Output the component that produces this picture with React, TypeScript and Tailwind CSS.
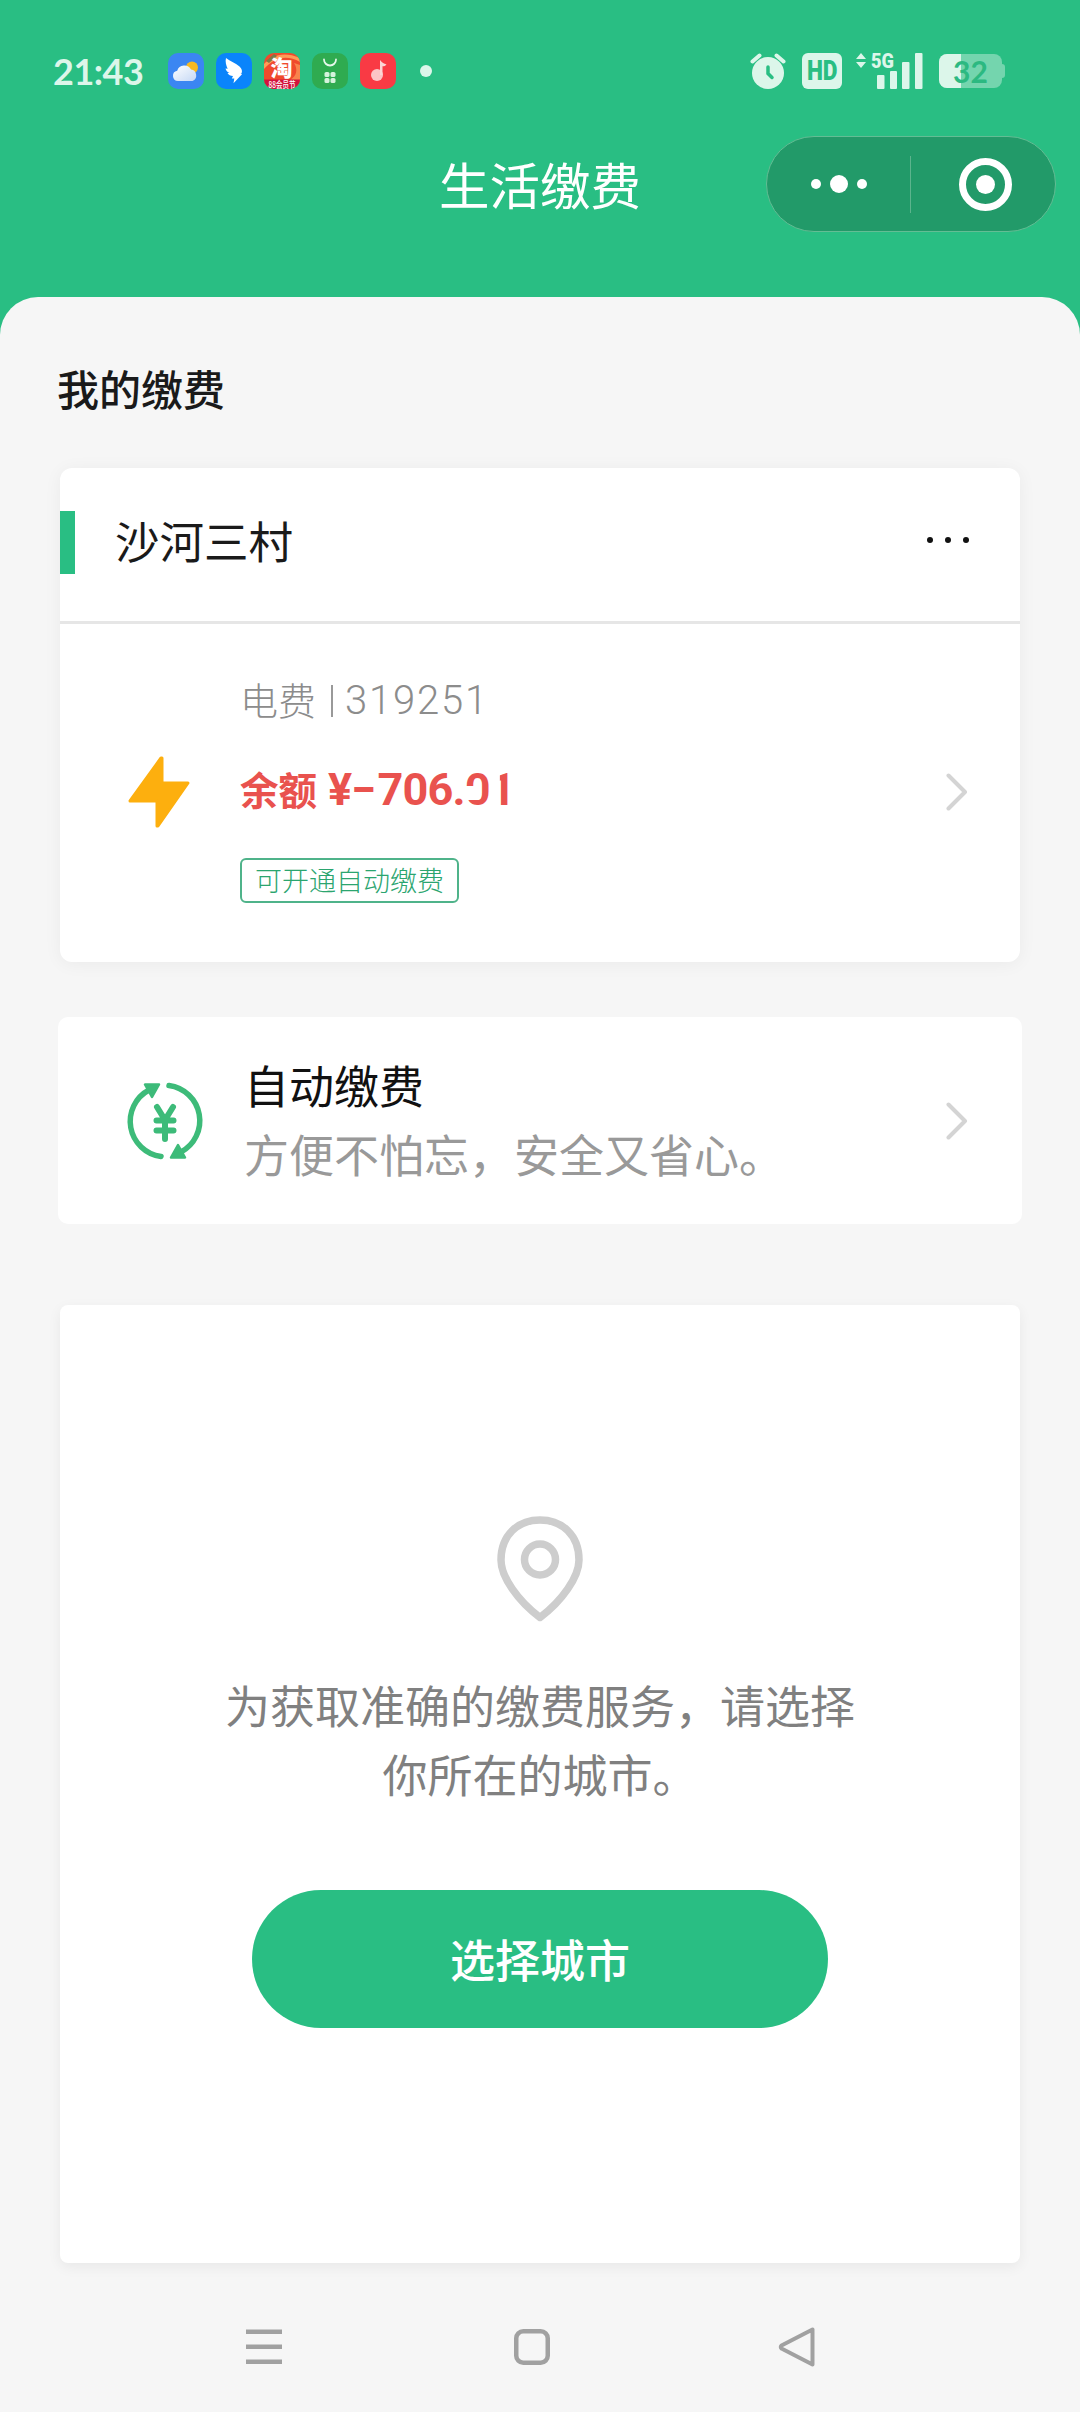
import type { ReactNode } from "react";

const SANS = "font-['Noto_Sans_CJK_SC','Roboto',sans-serif]";

export default function App() {
  return (
    <div className={`flex h-[2412px] w-[1080px] flex-col overflow-hidden bg-[#29be83] ${SANS}`}>
      <StatusBar />
      <TitleBar />
      <main className="flex flex-1 flex-col rounded-t-[38px] bg-[#f6f6f6] px-[60px]">
        <h2 className="mt-[61px] h-[60px] -translate-x-[3px] text-[42px] leading-[60px] font-medium text-[#1a1a1a]">
          我的缴费
        </h2>
        <BillCard />
        <AutoPayCard />
        <CityCard />
        <NavBar />
      </main>
    </div>
  );
}

// ── System status bar ────────────────────────────────────────────
function StatusBar() {
  return (
    <div className="mt-[47px] flex h-12 items-center pl-[53px] text-[#dcf6ea]">
      <span className="w-[115px] font-['Lato',sans-serif] text-[36px] leading-[48px] font-bold tracking-[-0.5px]">
        21:43
      </span>
      <div className="flex items-center gap-3">
        <WeatherIcon />
        <WingIcon />
        <TaobaoIcon />
        <MarketIcon />
        <MusicIcon />
      </div>
      <span className="ml-6 size-3 rounded-full bg-[#dcf6ea]" />

      <div className="ml-[318px] flex items-center">
        <AlarmIcon />
        <span className="ml-4 flex h-9 w-10 items-center justify-center rounded-[6px] bg-[#dcf6ea] font-['Roboto',sans-serif] text-[27px] leading-none font-black text-[#29be83]">
          <span className="scale-x-[0.84]">HD</span>
        </span>
        <SignalIcon />
        <Battery />
      </div>
    </div>
  );
}

function AppTile({ color, children }: { color: string; children: ReactNode }) {
  return (
    <svg width="36" height="36" viewBox="0 0 36 36" className="overflow-visible">
      <rect width="36" height="36" rx="10" fill={color} />
      {children}
    </svg>
  );
}

function WeatherIcon() {
  return (
    <AppTile color="#3b86f2">
      <defs>
        <linearGradient id="cloud" x1="0" y1="0" x2="1" y2="1">
          <stop offset="0" stopColor="#fff" />
          <stop offset="1" stopColor="#c5d8f5" />
        </linearGradient>
      </defs>
      <circle cx="24" cy="14.500" r="6" fill="#f8b922" />
      <path d="M10 28a5.200 5.200 0 0 1-.8-10.300A7.500 7.500 0 0 1 23 16.500a6 6 0 0 1 1.500 11.500z" fill="url(#cloud)" />
    </AppTile>
  );
}

function WingIcon() {
  return (
    <AppTile color="#0a84fb">
      <path
        d="M10 5c4 3.500 10 5 13.500 8.500 2.500 2.500 3 4.500 2 7h-1l1.500.8-8.500 9 .8-4.800h-2.500l1.200-2.500c-2.500 0-4.500-1-5.500-3h2c-2-1-3.500-2.500-4-4.500l2.200.3C10.200 12.500 9 8.500 10 5z"
        fill="#fff"
      />
    </AppTile>
  );
}

function TaobaoIcon() {
  return (
    <AppTile color="#f04a2c">
      <clipPath id="taobao-tile">
        <rect width="36" height="36" rx="10" />
      </clipPath>
      <g clipPath="url(#taobao-tile)">
        <path d="M0 11C8 2 20-2 36 5v4C22 1 10 5 0 16z" fill="#ff9b57" />
        <path d="M2 8l8-7 3 2-8 7z" fill="#7d7a45" />
        <path d="M30 10c4 6 3 13-4 17h10V12z" fill="#f9844c" />
        <rect y="26.500" width="36" height="9.500" fill="#d3123c" />
      </g>
      <text x="17.500" y="22.500" textAnchor="middle" fontSize="22" fontWeight="900" fill="#fff">
        淘
      </text>
      <text x="18" y="34.500" textAnchor="middle" fontSize="9" fontWeight="500" textLength="27" lengthAdjust="spacingAndGlyphs" fill="#fff">
        88会员节
      </text>
    </AppTile>
  );
}

function MarketIcon() {
  return (
    <AppTile color="#2fab50">
      <path d="M12 6.500a6 6 0 0 0 12 0" fill="none" stroke="#e6f8ea" strokeWidth="1.800" strokeLinecap="round" />
      <g fill="#d5f3dc">
        <rect x="12.500" y="19" width="5" height="5" rx="1.600" />
        <rect x="18.500" y="19" width="5" height="5" rx="1.600" />
        <rect x="12.500" y="25" width="5" height="5" rx="1.600" />
        <rect x="18.500" y="25" width="5" height="5" rx="1.600" />
      </g>
    </AppTile>
  );
}

function MusicIcon() {
  return (
    <AppTile color="#f93a44">
      <circle cx="17" cy="22" r="6" fill="#fcc4c6" />
      <path d="M20 22V7c2 3 4 3.500 6.500 4.500-1 1.500-3 2-4 1.800V22z" fill="#fcd5d6" />
    </AppTile>
  );
}

function AlarmIcon() {
  return (
    <svg width="36" height="36" viewBox="0 0 36 36" fill="none">
      <circle cx="18" cy="20" r="16" fill="#dcf6ea" />
      <path d="M2.500 8.500l7-6M33.500 8.500l-7-6" stroke="#dcf6ea" strokeWidth="4" strokeLinecap="round" />
      <path d="M18 14v6.500l4 4" stroke="#29be83" strokeWidth="3.500" strokeLinecap="round" />
    </svg>
  );
}

function SignalIcon() {
  return (
    <svg width="70" height="38" viewBox="0 0 70 38" className="-mt-0.5 ml-3.5 overflow-visible" fill="#dcf6ea">
      <path d="M0 8l5-6 5 6zM0 11l5 6 5-6z" />
      <text
        x="15"
        y="17"
        fontSize="21"
        fontWeight="900"
        textLength="23"
        lengthAdjust="spacingAndGlyphs"
        className="font-['Roboto',sans-serif]"
      >
        5G
      </text>
      <rect x="21" y="24" width="7.500" height="14" rx="1" />
      <rect x="34" y="20" width="7" height="18" rx="1" />
      <rect x="46" y="11" width="7.500" height="27" rx="1" />
      <rect x="59" y="2" width="7.500" height="36" rx="1" />
    </svg>
  );
}

function Battery() {
  return (
    <div className="ml-[13px] flex items-center">
      <div className="relative flex h-[34px] w-[63px] items-center justify-center overflow-hidden rounded-lg bg-[#74d5ae]">
        <span className="absolute inset-y-0 left-0 w-[22px] bg-[#dcf6ea]" />
        <span className="relative font-['Lato',sans-serif] text-[30px] leading-[34px] font-bold text-[#2cb981]">32</span>
      </div>
      <span className="h-3.5 w-[3px] rounded-r bg-[#74d5ae]" />
    </div>
  );
}

// ── Mini-program title and capsule ───────────────────────────────
function TitleBar() {
  return (
    <header className="mt-[41px] mb-[65px] grid h-24 grid-cols-[1fr_auto_1fr] items-center">
      <h1 className="col-start-2 -translate-y-px text-[50.500px] leading-[96px] text-white">生活缴费</h1>
      <div className="mr-6 flex h-24 w-[290px] items-center justify-self-end rounded-full border border-[#63bd94] bg-[#229a69]">
        <div className="flex w-[143px] items-center justify-center gap-[9px]">
          <span className="size-2.5 rounded-full bg-white" />
          <span className="size-[18px] rounded-full bg-white" />
          <span className="size-2.5 rounded-full bg-white" />
        </div>
        <span className="h-[57px] w-px bg-[#5cb48d]" />
        <div className="flex flex-1 items-center justify-center pl-1">
          <span className="flex size-[53px] items-center justify-center rounded-full border-[7px] border-white">
            <span className="size-[19px] rounded-full bg-white" />
          </span>
        </div>
      </div>
    </header>
  );
}

function Chevron() {
  return (
    <svg width="22" height="38" viewBox="0 0 22 38" fill="none" stroke="#d4d4d4" strokeWidth="4" strokeLinecap="round" strokeLinejoin="round">
      <path d="M2.500 2.500L19 19 2.500 35.500" />
    </svg>
  );
}

// ── Household bill ───────────────────────────────────────────────
function BillCard() {
  return (
    <section className="mt-[50px] flex h-[494px] shrink-0 flex-col overflow-hidden rounded-xl bg-white shadow-[0_2px_18px_rgba(0,0,0,0.05)]">
      <div className="flex h-[156px] shrink-0 items-center border-b-[3px] border-[#e6e6e6] pr-[51px] pb-[5px]">
        <span className="h-[63px] w-[15px] bg-[#29be83]" />
        <h3 className="ml-10 -translate-y-0.5 text-[44.500px] leading-[60px] text-[#1a1a1a]">沙河三村</h3>
        <div className="ml-auto flex -translate-y-0.5 gap-3">
          <span className="size-1.5 rounded-full bg-[#111]" />
          <span className="size-1.5 rounded-full bg-[#111]" />
          <span className="size-1.5 rounded-full bg-[#111]" />
        </div>
      </div>

      <div className="flex flex-1 items-center pr-[52px] pb-[3px]">
        <svg width="64" height="74" viewBox="0 0 64 74" className="ml-[67px]">
          <path d="M34 3h1v25h26L31 71h-1V46H3z" fill="#fdaf0e" stroke="#fdaf0e" strokeWidth="3" strokeLinejoin="round" />
        </svg>
        <div className="ml-[49px] flex h-[222px] flex-col">
          <div className="flex h-10 items-center whitespace-pre leading-10 text-[#8c8c8c]">
            <span className="-translate-y-0.5 text-[38px] font-light">电费</span>
            <span className="ml-[15px] h-8 w-0.5 bg-[#999]" />
            <span className="ml-3 font-['Roboto',sans-serif] text-[40px] font-light tracking-[1.800px]">319251</span>
          </div>
          <div className="mt-[47px] flex h-11 items-center leading-[44px] font-bold text-[#e9524e]">
            <span className="-translate-y-0.5 text-[38.500px]">余额</span>
            <span className="ml-[11px] flex font-['Roboto',sans-serif] text-[45px] tracking-[-0.8px]">
              <span>¥</span>
              <span className="mr-0.5">−</span>
              <span>706.</span>
              {/* the cents are half rubbed out: open left side, bare stem */}
              <span className="relative">
                0
                <span className="absolute top-[18px] left-0 h-3.5 w-[13px] bg-white" />
              </span>
              <span className="[clip-path:inset(0_0_0_10px)]">1</span>
            </span>
          </div>
          <span className="mt-[46px] flex h-[45px] w-[219px] items-center justify-center rounded-md border-2 border-[#4fb38a] pb-0.5 text-[27px] leading-none font-light text-[#2ba56f]">
            可开通自动缴费
          </span>
        </div>
        <span className="ml-auto">
          <Chevron />
        </span>
      </div>
    </section>
  );
}

// ── Auto payment entry ───────────────────────────────────────────
function AutoPayCard() {
  return (
    <section className="-mx-0.5 mt-[55px] flex h-[207px] shrink-0 items-center rounded-[10px] bg-white pr-[54px] pl-[67px]">
      <svg width="80" height="80" viewBox="0 0 80 80" fill="none" stroke="#3dbb79" strokeWidth="5.500" strokeLinecap="round">
        <path d="M36 75.500A35.500 35.500 0 0 1 24 9" />
        <path d="M44 4.500A35.500 35.500 0 0 1 56 71" />
        <path d="M20 3.500h14L27 16z" fill="#3dbb79" strokeWidth="2.500" strokeLinejoin="round" />
        <path d="M60 76.500H46L53 64z" fill="#3dbb79" strokeWidth="2.500" strokeLinejoin="round" />
        <path d="M32 26L40 39l8-13M40 39v19M31.500 39.500h17M31.500 49.500h17" strokeWidth="6" />
      </svg>
      <div className="ml-[39px] flex -translate-y-0.5 flex-col text-[45px] leading-[69px]">
        <span className="text-[#111]">自动缴费</span>
        <span className="text-[#999]">方便不怕忘，安全又省心。</span>
      </div>
      <span className="ml-auto">
        <Chevron />
      </span>
    </section>
  );
}

// ── City picker prompt ───────────────────────────────────────────
function CityCard() {
  return (
    <section className="mt-[81px] flex h-[958px] shrink-0 flex-col items-center rounded-lg bg-white shadow-[0_4px_14px_rgba(0,0,0,0.06)]">
      <svg width="88" height="108" viewBox="0 0 88 108" fill="none" stroke="#cdcdcd" strokeWidth="7.500" className="mt-[210px]" strokeLinejoin="round">
        <path d="M44 102.500C22 86 5 62 5 45 5 20 22 5 44 5s39 15 39 40c0 17-17 41-39 57.500z" />
        <circle cx="44" cy="44.500" r="15.500" />
      </svg>
      <p className="mt-[47px] text-center text-[45px] leading-[69px] text-[#808080]">
        为获取准确的缴费服务，请选择
        <br />
        你所在的城市。
      </p>
      <button className="mt-[82px] h-[138px] w-[576px] rounded-full bg-[#29be83] text-[45px] leading-[136px] font-medium text-white">
        选择城市
      </button>
    </section>
  );
}

function NavBar() {
  return (
    <nav className="mt-[62px] flex h-11 shrink-0 items-center pl-[186px]">
      <svg width="36" height="36" viewBox="0 0 36 36" fill="#a1a1a1">
        <path d="M0 0.500h36v4.500H0zM0 15.500h36v4.500H0zM0 30.500h36v4.500H0z" />
      </svg>
      <svg width="36" height="36" viewBox="0 0 36 36" fill="none" stroke="#a1a1a1" strokeWidth="4.500" className="ml-[232px]">
        <rect x="2.250" y="2.250" width="31.500" height="31.500" rx="7" />
      </svg>
      <svg width="37" height="40" viewBox="0 0 37 40" fill="none" stroke="#a1a1a1" strokeWidth="4" strokeLinejoin="round" className="ml-[228px]">
        <path d="M34.500 2.500v35L3.500 21.500q-1.500-1.500 0-3z" />
      </svg>
    </nav>
  );
}
